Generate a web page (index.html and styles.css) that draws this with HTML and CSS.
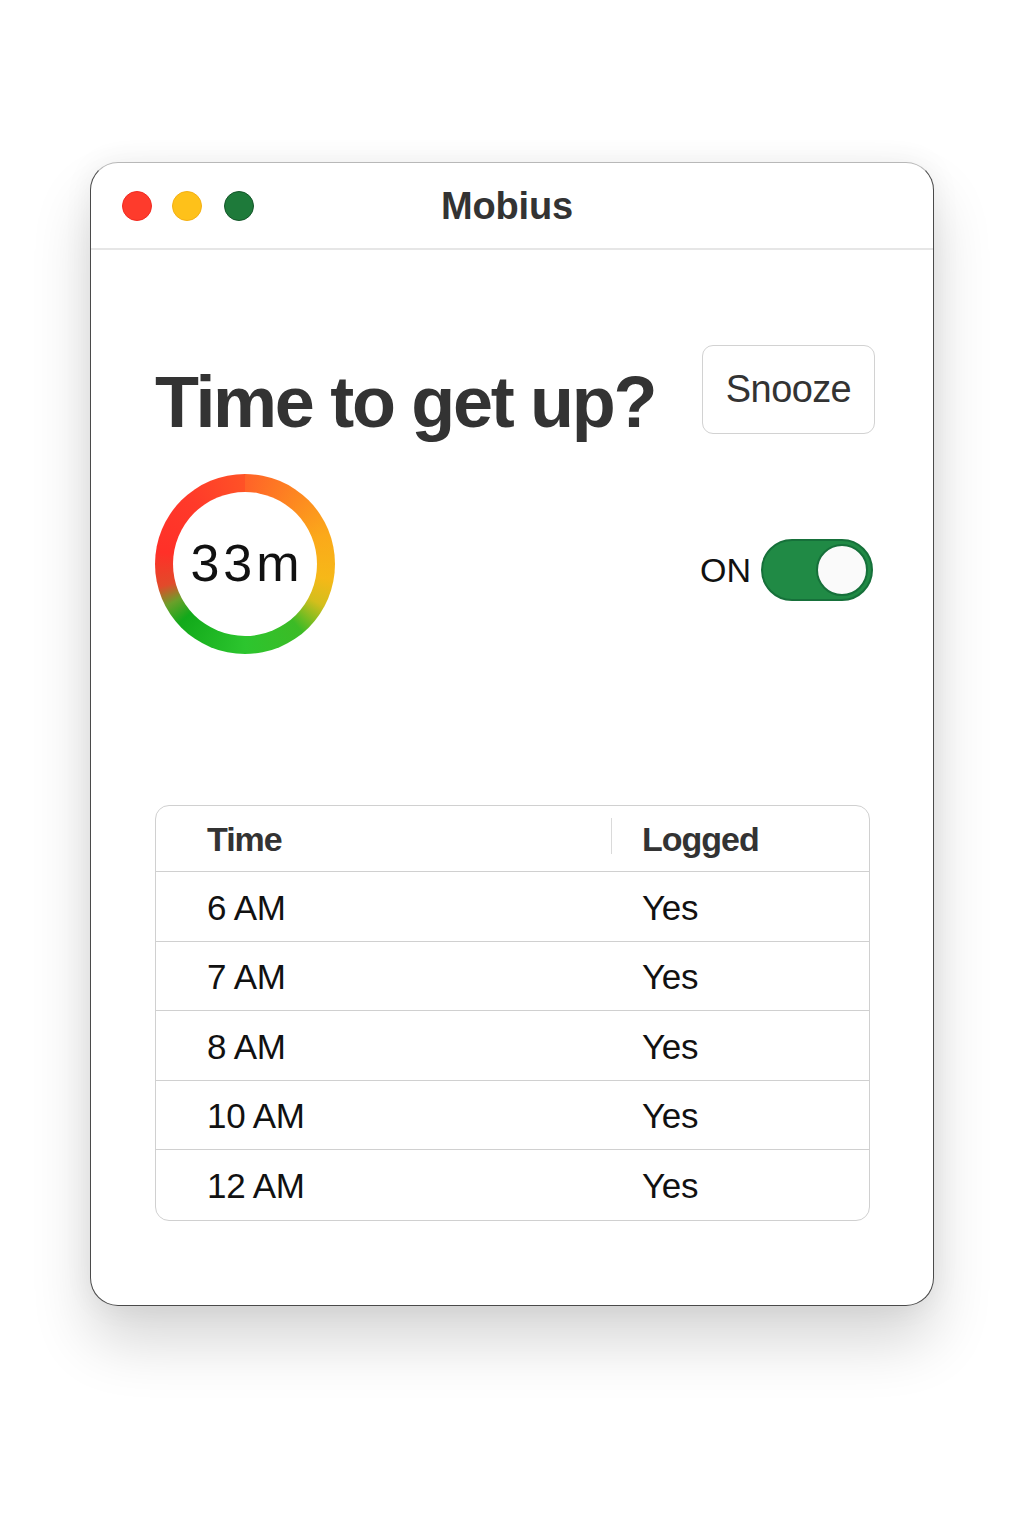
FILE: index.html
```html
<!DOCTYPE html>
<html lang="en">
<head>
<meta charset="utf-8">
<title>Mobius</title>
<link rel="stylesheet" href="styles.css">
</head>
<body>
<div class="window">
  <div class="titlebar">
    <div class="lights">
      <span class="light red"></span>
      <span class="light yellow"></span>
      <span class="light green"></span>
    </div>
    <div class="title">Mobius</div>
  </div>
  <div class="content">
    <div class="top-row">
      <h1 class="heading">Time to get up?</h1>
      <button class="snooze">Snooze</button>
    </div>
    <div class="mid-row">
      <div class="ring"><span class="ring-text">33m</span></div>
      <div class="toggle-group">
        <span class="toggle-label">ON</span>
        <span class="toggle"><span class="knob"></span></span>
      </div>
    </div>
    <div class="table">
      <div class="row head">
        <div class="cell c1">Time</div>
        <div class="divider"></div>
        <div class="cell c2">Logged</div>
      </div>
      <div class="row"><div class="cell c1">6 AM</div><div class="cell c2">Yes</div></div>
      <div class="row"><div class="cell c1">7 AM</div><div class="cell c2">Yes</div></div>
      <div class="row"><div class="cell c1">8 AM</div><div class="cell c2">Yes</div></div>
      <div class="row"><div class="cell c1">10 AM</div><div class="cell c2">Yes</div></div>
      <div class="row last"><div class="cell c1">12 AM</div><div class="cell c2">Yes</div></div>
    </div>
  </div>
</div>
</body>
</html>
```
FILE: styles.css
```css
* { box-sizing: border-box; }
html, body { margin: 0; padding: 0; background: #fff; }
body {
  font-family: "Liberation Sans", Arial, sans-serif;
  padding: 162px 90px 0;
  height: 1536px;
}
.window {
  width: 844px;
  height: 1144px;
  border: 1px solid #4a4a4a;
  border-top-color: #b8b8b8;
  border-radius: 28px;
  background: #fff;
  box-shadow: 0 36px 60px rgba(0,0,0,0.16), 0 0 30px rgba(0,0,0,0.06);
  display: flex;
  flex-direction: column;
  overflow: hidden;
}
.titlebar {
  height: 87px;
  flex: none;
  border-bottom: 2px solid #e6e6e6;
  display: flex;
  align-items: center;
  position: relative;
  padding-left: 31px;
}
.lights { display: flex; gap: 20px; }
.light {
  width: 30px; height: 30px; border-radius: 50%;
  display: block;
}
.light.red { background: #fe3b2c; border: 1px solid #f22a20; }
.light.yellow { background: #fec11a; border: 1px solid #f5b012; }
.light.green { background: #1e7a3a; border: 1px solid #14562a; margin-left: 2px; }
.title {
  position: absolute;
  left: 0; right: 0; top: 0; bottom: 0;
  display: flex; align-items: center; justify-content: center;
  font-size: 38px;
  font-weight: 700;
  color: #333;
  padding-right: 10px;
  padding-top: 2px;
  letter-spacing: -0.2px;
  pointer-events: none;
}
.content {
  padding: 95px 64px 0 64px;
  display: flex;
  flex-direction: column;
}
.top-row {
  display: flex;
  justify-content: space-between;
  align-items: flex-start;
  margin-right: -6px;
}
.heading {
  margin: 16px 0 0 0;
  font-size: 72px;
  line-height: 83px;
  font-weight: 700;
  color: #333;
  letter-spacing: -2.3px;
}
.snooze {
  width: 173px;
  height: 89px;
  border: 1.5px solid #d2d2d2;
  border-radius: 11px;
  background: #fff;
  font-family: "Liberation Sans", Arial, sans-serif;
  font-size: 38px;
  color: #333;
  letter-spacing: -0.6px;
  padding: 0;
}
.mid-row {
  margin-top: 30px;
  display: flex;
  justify-content: space-between;
  align-items: center;
}
.ring {
  width: 180px;
  height: 180px;
  border-radius: 50%;
  background: conic-gradient(from 0deg,
    #ff6228 0deg, #fd8a20 40deg, #fba91a 70deg, #f6b818 100deg,
    #d4be1c 118deg, #3cbb26 140deg, #2cc52e 180deg, #12a91a 228deg,
    #6aa02a 242deg, #e24a2a 255deg, #ff3028 278deg, #ff3a2a 320deg, #ff5226 360deg);
  display: flex;
  align-items: center;
  justify-content: center;
  position: relative;
}
.ring::before {
  content: "";
  position: absolute;
  inset: 18px;
  border-radius: 50%;
  background: #fff;
}
.ring-text {
  position: relative;
  font-size: 52px;
  color: #111;
  letter-spacing: 4px;
  margin-left: 4px;
  margin-top: -2px;
}
.toggle-group {
  display: flex;
  align-items: center;
  gap: 10px;
  margin-top: 12px;
  margin-right: -4px;
}
.toggle-label {
  font-size: 34px;
  color: #111;
}
.toggle {
  width: 112px;
  height: 62px;
  border-radius: 31px;
  background: #208a45;
  border: 2px solid #16703a;
  display: flex;
  align-items: center;
  justify-content: flex-end;
  padding-right: 3px;
}
.knob {
  width: 52px;
  height: 52px;
  border-radius: 50%;
  background: #fafafa;
  border: 2px solid #16703a;
}
.table {
  margin-top: 151px;
  border: 1.5px solid #d0d0d0;
  border-radius: 14px;
  display: flex;
  flex-direction: column;
  width: 715px;
}
.row {
  display: flex;
  align-items: center;
  height: 69.5px;
  border-bottom: 1.5px solid #d0d0d0;
  position: relative;
  padding-top: 3px;
}
.row.head { height: 66px; padding-top: 2px; }
.row.last { border-bottom: none; }
.cell {
  font-size: 35px;
  color: #111;
  letter-spacing: -0.3px;
}
.c1 { width: 486px; padding-left: 51px; }
.c2 { flex: 1; }
.head .cell {
  font-weight: 700;
  color: #333;
  font-size: 34px;
  letter-spacing: -1px;
}
.divider {
  position: absolute;
  left: 455px;
  top: 12px;
  width: 1px;
  height: 36px;
  background: #dadada;
}
```
